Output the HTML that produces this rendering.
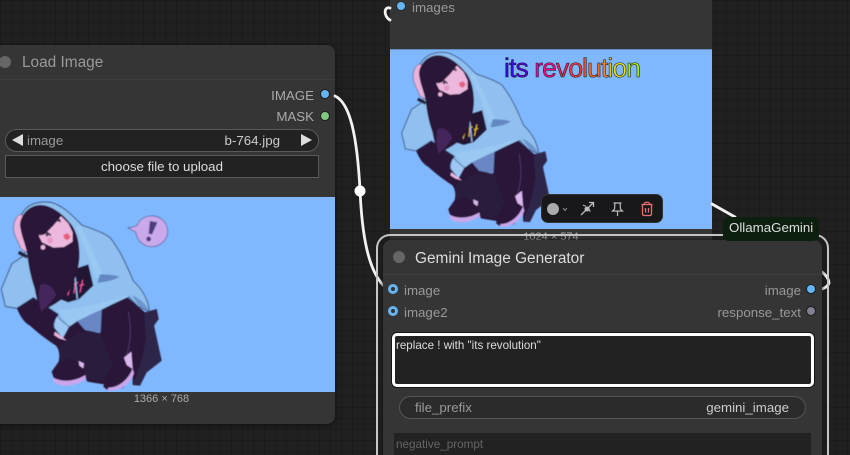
<!DOCTYPE html>
<html><head><meta charset="utf-8"><style>
html,body{margin:0;padding:0;width:850px;height:455px;overflow:hidden;background:#202020}
#w{position:absolute;left:0;top:0;width:850px;height:455px;overflow:hidden;background-color:#202020;background-image:linear-gradient(#1b1b1b 1px,transparent 1px),linear-gradient(90deg,#1b1b1b 1px,transparent 1px);background-size:11px 11px;font-family:"Liberation Sans",sans-serif}
#w div{position:absolute;box-sizing:border-box;white-space:nowrap}
.node{background:#353535}
.lb{font-size:13.3px;line-height:18px;color:#999}
.r{text-align:right}
.dot{border-radius:50%;width:10px;height:10px;border:1px solid #1c1c1c}
svg{position:absolute;left:0;top:0}
</style></head><body><div id="w">
<svg width="850" height="455" style="z-index:1"><g fill="none" stroke="#f2f2f2" stroke-width="2.8" stroke-linecap="round"><path d="M335 96C350 103 357 135 360 190C362 235 368 270 384 286"/><path d="M390 8C384 6 383 16 390 20"/><path d="M712 204L735 217"/><path d="M760 238L775 242"/><path d="M822 272C827 276 829 280 829 283C828 286 825 288 822 289"/></g><circle cx="360" cy="191" r="5.5" fill="#fff"/></svg>

<svg width="0" height="0" style="position:absolute"><defs>
<filter id="b" x="-5%" y="-5%" width="110%" height="110%"><feGaussianBlur stdDeviation="1.600"/></filter>
<g id="girl">
<path d="M50 338C60 365 75 385 90 392C120 420 150 440 168 452C178 465 180 480 176 500L155 530L165 560L200 572L258 552L262 560L312 568L310 575L325 587L370 578L398 530L398 570L420 572L440 532L485 497L462 392L476 372L470 342L435 352L380 305L300 340L180 335L100 305Z" fill="#2a1238"/>
<path d="M180 452L240 412L300 412L335 500L345 495L310 560L262 552L250 510L210 490L178 500Z" fill="#2a1c3c"/>
<path d="M432 355L470 342L476 372L462 392L485 497L440 532L420 572L398 570L424 500L438 430Z" fill="#2f2548"/>
<path d="M385 350C395 400 392 450 378 485" stroke="#54477a" stroke-width="2" fill="none"/>
<path d="M160 548C185 562 225 560 256 540L258 552C225 575 185 580 160 560Z" fill="#cba6ea"/>
<path d="M325 578C355 578 385 555 398 520L402 535C390 568 360 590 322 587Z" fill="#cba6ea"/>
<path d="M372 488L394 470L398 522L380 510Z" fill="#d9b8ee"/><path d="M236 498L252 505L250 520L238 512Z" fill="#d9b8ee"/>
<path d="M65 58C80 30 110 18 150 22C190 30 225 70 245 90C275 102 310 112 330 128C365 172 385 225 400 258C425 282 445 312 448 350L415 335L385 304L305 345L300 415L255 405L232 378L208 395L188 432L162 398L160 385L175 358L140 335L100 308L50 340L16 334L4 282L36 206L75 180L80 120Z" fill="#8fc0ef" stroke="#2c3a68" stroke-width="2.5" stroke-linejoin="round"/>
<path d="M232 378C245 372 285 350 305 345L302 412L255 405Z" fill="#6a86c4"/>
<path d="M395 300C420 310 440 330 447 348L418 335Z" fill="#6d96cc"/>
<path d="M240 90C262 130 285 190 310 240L285 250C270 190 245 130 225 95Z" fill="#99c8f3"/>
<path d="M300 238C320 238 345 240 358 245C340 258 310 262 292 264Z" fill="#6488c4"/>
<path d="M175 345L225 340L300 325L388 300L384 306L305 342L232 378L208 395L200 385Z" fill="#99c8f3"/>
<path d="M175 238L265 208L280 272L238 312L205 322L178 312Z" fill="#221234"/>
<path d="M190 292L196 272L204 298L212 270M222 295L226 262M222 268L234 262M240 292L248 255M238 272L252 268" style="stroke:currentColor" stroke-width="3.500" fill="none"/>
<path d="M152 160L208 152L204 196L178 202L160 180Z" fill="#6e52a6"/>
<path d="M172 200L200 210M178 240L190 305M225 245L232 312" stroke="#8fb8e8" stroke-width="4.500" fill="none"/>
<path d="M42 110C38 88 45 68 60 58L90 70L100 140L85 176L62 160C55 140 45 125 42 110Z" fill="#e9b2db" stroke="#3a2050" stroke-width="1.500"/>
<path d="M56 172L82 186" stroke="#26203a" stroke-width="10"/>
<path d="M60 90C62 60 85 32 120 30C155 30 190 58 215 90C232 115 240 150 238 190C236 225 222 265 200 300C180 320 150 335 124 350C112 325 108 300 104 280C90 240 85 205 82 180C78 150 64 125 60 90Z" fill="#291437"/>
<path d="M120 270C135 262 160 272 168 300C155 320 140 335 124 350C116 325 114 300 120 270Z" fill="#44285c"/>
<path d="M116 122L128 108L152 84L178 58L205 85L218 112L218 140L192 156L160 158L126 142Z" fill="#ecb8de"/>
<path d="M118 122C128 100 150 78 176 54L186 60L160 92L134 118Z" fill="#291437"/>
<path d="M130 114c8-3 16 0 22 8M165 70c7-1 13 3 16 11" stroke="#241232" stroke-width="5" fill="none"/>
<circle cx="141" cy="120" r="4" fill="#3e2c50"/><circle cx="173" cy="76" r="4" fill="#3e2c50"/>
<path d="M190 120l13-6 9 12-10 10-10-6z" fill="#e4627e"/>
<circle cx="150" cy="136" r="9" fill="#e398c6"/>
<circle cx="129" cy="157" r="7" fill="#eab5dc"/>
<path d="M172 362C165 372 160 382 162 398L188 432L208 395C195 385 180 375 172 362Z" fill="#9cc8f3" stroke="#2c3a68" stroke-width="2"/>
<path d="M165 410L200 437L178 430L162 420Z" fill="#ecb8de"/>
</g>
</defs></svg>

<!-- Load Image -->
<div class="node" style="left:-20px;top:45px;width:355px;height:379px;border-radius:8px;box-shadow:0 1px 5px #111">
<div style="left:0;top:34px;width:355px;height:1px;background:#3e3e3e"></div></div>
<div style="left:-1px;top:56px;width:12px;height:12px;border-radius:50%;background:#666;z-index:2"></div>
<div style="left:22px;top:53px;font-size:15.4px;line-height:20px;color:#999">Load Image</div>
<div class="lb r" style="right:536px;top:87px;color:#aaa">IMAGE</div>
<div class="dot" style="left:320px;top:89px;background:#64b5f6"></div>
<div class="lb r" style="right:536px;top:108px;color:#aaa">MASK</div>
<div class="dot" style="left:320px;top:111px;background:#81c784"></div>
<div style="left:5px;top:129px;width:314px;height:23px;border-radius:12px;background:#222;border:1px solid #5a5a5a"></div>
<svg width="850" height="455" style="z-index:2"><path d="M23 134V146L12 140Z" fill="#ddd"/><path d="M301 134V146L312 140Z" fill="#ddd"/></svg>
<div class="lb" style="left:27px;top:132px;color:#999">image</div>
<div class="lb r" style="right:570px;top:132px;color:#ccc">b-764.jpg</div>
<div style="left:5px;top:155px;width:314px;height:23px;background:#222;border:1px solid #5a5a5a;color:#ddd;font-size:13.3px;line-height:21px;text-align:center">choose file to upload</div>
<svg width="335" height="195" viewBox="0 0 335 195" style="left:0;top:197px"><rect width="335" height="195" fill="#7fb8ff"/>
<g transform="translate(0,-2) scale(.3333)"><g filter="url(#b)"><use href="#girl" style="color:#e85a9c"/>
<path d="M412 90C420 70 440 62 460 63C485 65 503 85 503 110C503 135 480 155 455 155C430 155 410 135 408 112C400 108 392 104 384 98C395 98 405 96 412 90Z" fill="#c9a9ea" stroke="#4a5590" stroke-width="2"/>
<path d="M450 78L472 82L456 118L446 116Z" fill="#4d3a7c"/><circle cx="446" cy="132" r="7" fill="#4d3a7c"/></g></g></svg>
<div style="left:0;top:392px;width:323px;text-align:center;font-size:11px;line-height:14px;color:#aaa">1366 × 768</div>

<!-- Preview node -->
<div class="node" style="left:390px;top:0;width:322px;height:241px"></div>
<div class="dot" style="left:396px;top:1px;background:#64b5f6;border-color:#2a2a2a"></div>
<div class="lb" style="left:412px;top:-1px">images</div>
<svg width="322" height="180" viewBox="0 0 322 180" style="left:390px;top:49px"><rect width="322" height="180" fill="#7fb8ff"/><rect width="322" height="1" fill="#5f8fc4"/>
<g transform="translate(10.5,-3) scale(.308)"><g filter="url(#b)"><use href="#girl" style="color:#e8c020"/></g></g>
<text x="114" y="28" font-family="Liberation Sans" font-size="26.500" stroke="#1c1c30" stroke-width=".6" textLength="137" lengthAdjust="spacing"><tspan fill="#2a10d8">i</tspan><tspan fill="#3610e0">t</tspan><tspan fill="#5a00e0">s</tspan> <tspan fill="#f00898">r</tspan><tspan fill="#ff0880">e</tspan><tspan fill="#ff2050">v</tspan><tspan fill="#ff3838">o</tspan><tspan fill="#ff5020">l</tspan><tspan fill="#ff6c20">u</tspan><tspan fill="#ff8818">t</tspan><tspan fill="#f4c800">i</tspan><tspan fill="#e8e000">o</tspan><tspan fill="#a8f000">n</tspan></text></svg>
<div style="left:390px;top:230px;width:322px;text-align:center;font-size:11px;line-height:14px;color:#aaa">1024 × 574</div>

<!-- Toolbar -->
<div style="left:541px;top:194px;width:122px;height:29px;background:#18181b;border:1px solid #333;border-radius:7px;z-index:3"></div>
<svg width="850" height="455" style="z-index:4" fill="none"><circle cx="553" cy="209" r="6" fill="#a9a9ae"/><path d="M563 208l2 2.500 2-2.500" stroke="#999" stroke-width="1"/>
<path d="M581 215L593 203M589 202.500h4.500v4.500" stroke="#bbb" stroke-width="1.300"/><circle cx="587" cy="209" r="2.500" fill="#bbb"/><path d="M583 205c1 1 2 1 3 1M590 212c0-1 0-2-1-3" stroke="#bbb"/>
<path d="M613.500 203h8M615 203l-.5 6-2 2h10l-2-2-.5-6M617.500 211v5" stroke="#bbb" stroke-width="1.200"/>
<path d="M641.500 204.500h11M644 204.500c0-3 6-3 6 0M642.500 205v9a1.500 1.500 0 0 0 1.500 1.500h6a1.500 1.500 0 0 0 1.500-1.500v-9M645.500 208v4.500M648.500 208v4.500" stroke="#f26d6d" stroke-width="1.300"/></svg>

<!-- Selection outline -->
<div style="left:376px;top:234px;width:453px;height:221px;border:2px solid #c5c5c5;border-bottom:0;border-radius:14px 14px 0 0;z-index:5"></div>
<div style="left:723px;top:217px;width:96px;height:24px;background:#0d2010;border-radius:6px;color:#ddd;font-size:13.3px;line-height:22px;padding-left:6px;z-index:7">OllamaGemini</div>

<!-- Gemini node -->
<div class="node" style="left:383px;top:240px;width:439px;height:215px;border-radius:8px 8px 0 0;z-index:6;box-shadow:0 0 4px #111">
<div style="left:0;top:34px;width:439px;height:1px;background:#3e3e3e"></div>
<div style="left:10px;top:11px;width:12px;height:12px;border-radius:50%;background:#666"></div>
<div style="left:32px;top:9px;font-size:15.4px;line-height:20px;color:#ddd">Gemini Image Generator</div>
<div style="left:5px;top:44px;width:10px;height:10px;border-radius:50%;border:3px solid #64b5f6;background:#333"></div>
<div style="left:5px;top:66px;width:10px;height:10px;border-radius:50%;border:3px solid #64b5f6;background:#333"></div>
<div class="lb" style="left:21px;top:42px">image</div>
<div class="lb" style="left:21px;top:64px">image2</div>
<div class="lb r" style="right:21px;top:42px">image</div>
<div class="lb r" style="right:21px;top:64px">response_text</div>
<div class="dot" style="left:423px;top:44px;background:#64b5f6"></div>
<div class="dot" style="left:423px;top:66px;background:#808090"></div>
<div style="left:9px;top:93px;width:422px;height:54px;background:#222;border:3px solid #fff;border-radius:5px;box-shadow:0 0 0 1px #151515;color:#ddd;font-size:11.6px;line-height:14px;padding:3px 1px">replace ! with "its revolution"</div>
<div style="left:16px;top:156px;width:407px;height:23px;background:#2b2b2b;border:1px solid #555;border-radius:12px"></div>
<div class="lb" style="left:32px;top:159px">file_prefix</div>
<div class="lb r" style="right:33px;top:159px;color:#ccc">gemini_image</div>
<div style="left:11px;top:193px;width:417px;height:22px;background:#222;color:#666;font-size:11.7px;line-height:14px;padding:5px 2px 0">negative_prompt</div>
</div>
</div></body></html>
